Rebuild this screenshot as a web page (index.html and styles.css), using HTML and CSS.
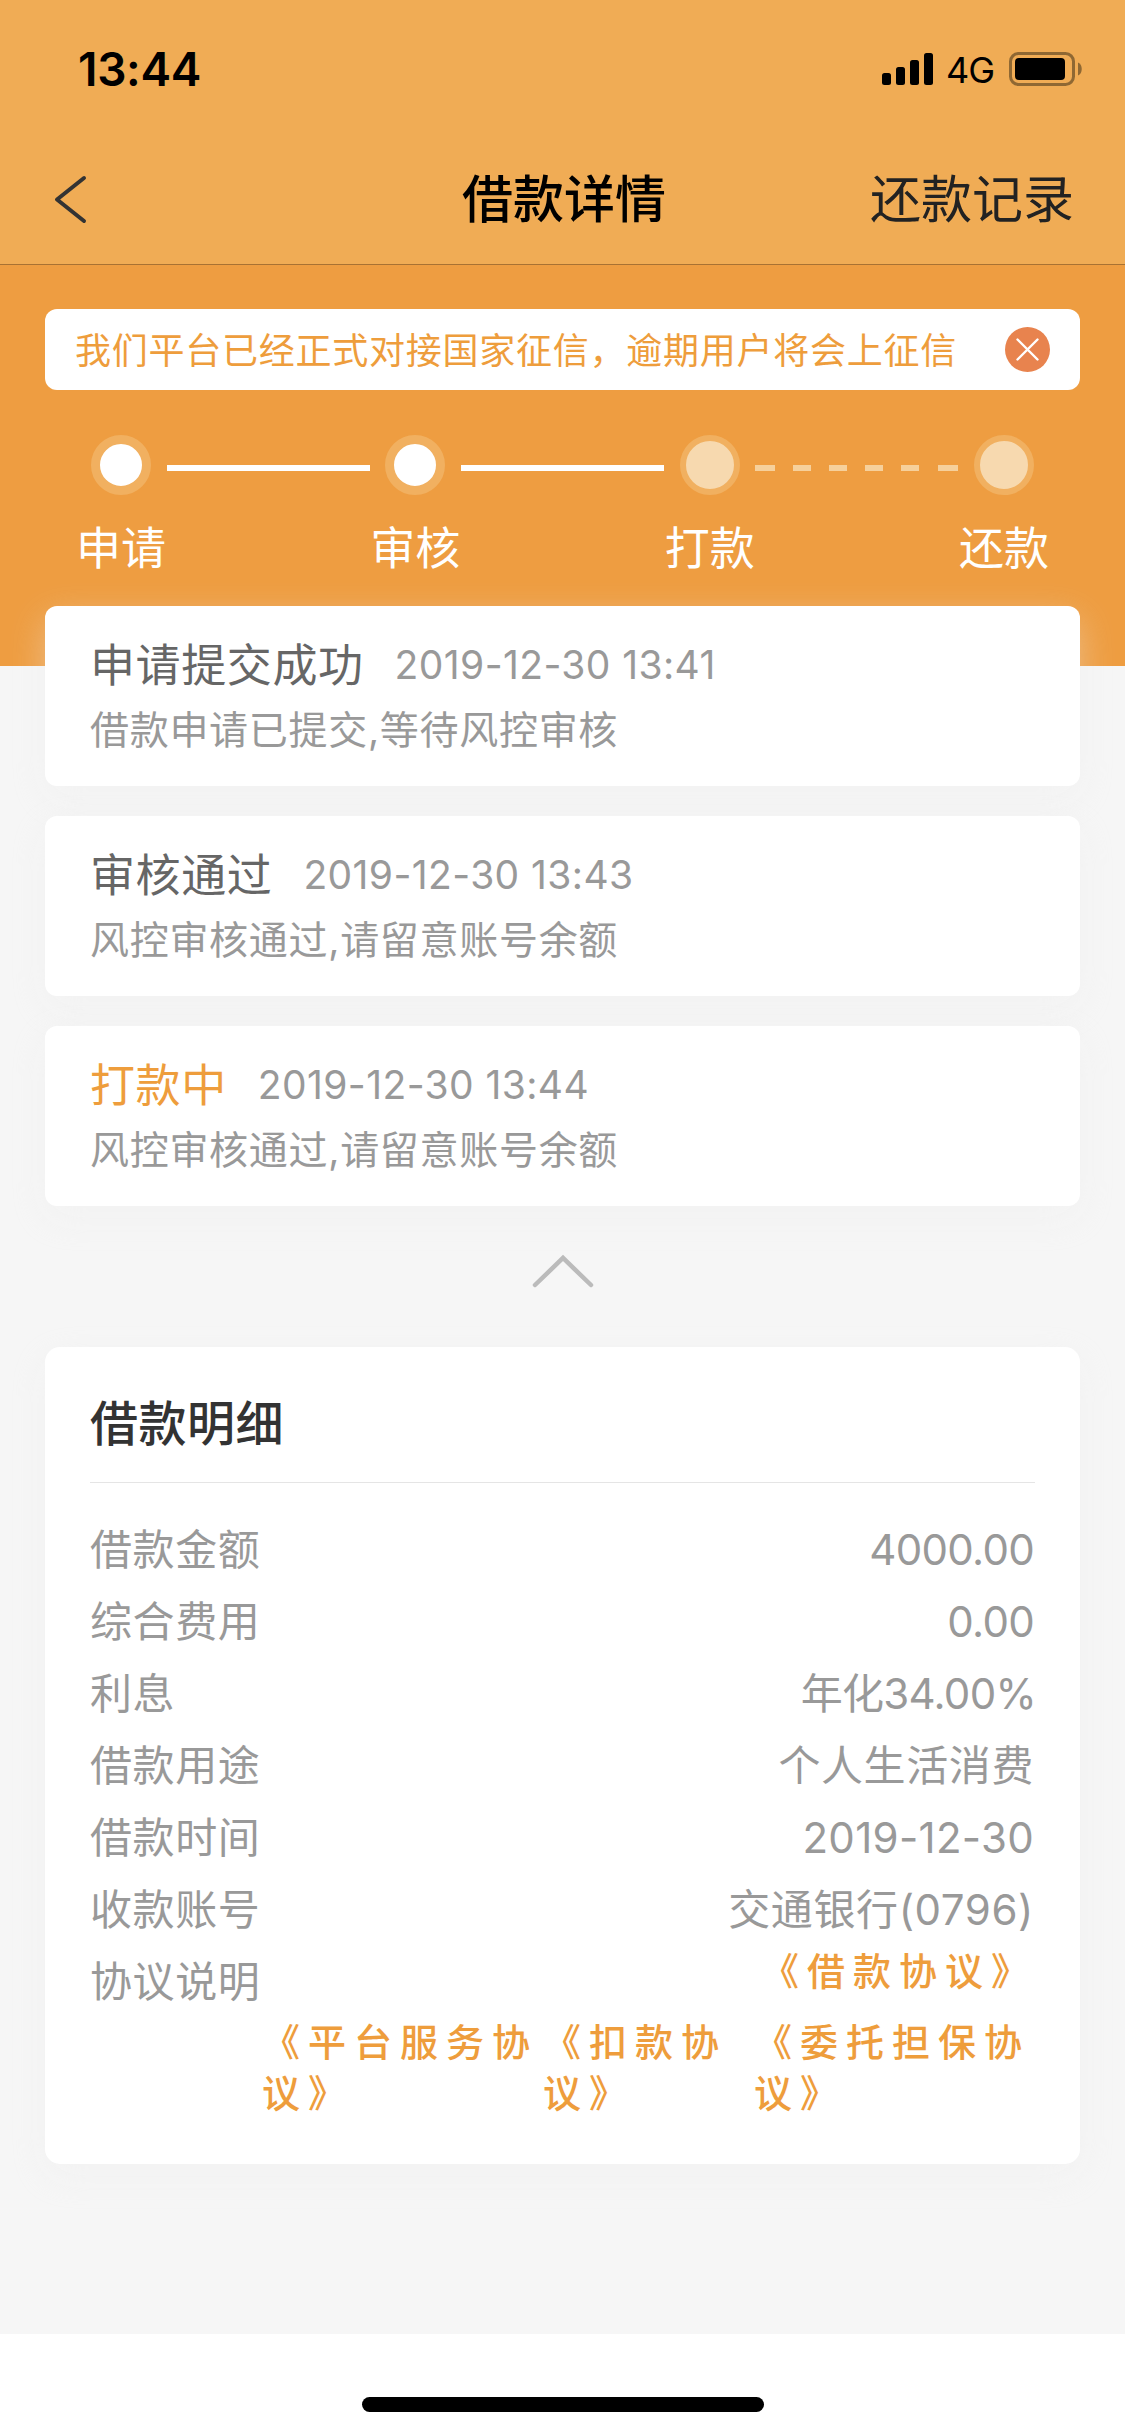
FILE: index.html
```html
<!DOCTYPE html>
<html lang="zh-CN">
<head>
    <meta charset="UTF-8">
    <meta name="viewport" content="width=device-width, initial-scale=1.0">
    <title>借款详情</title>
    <link rel="stylesheet" href="styles.css">
</head>
<body>

    <!-- Header -->
    <header class="header">
        <div class="status-bar">
            <span class="time">13:44</span>
            <div class="status-icons">
                <svg class="signal" width="51" height="32" viewBox="0 0 51 32">
                    <rect x="0" y="20" width="9" height="12" rx="2.5"/>
                    <rect x="14" y="14" width="9" height="18" rx="2.5"/>
                    <rect x="28" y="7" width="9" height="25" rx="2.5"/>
                    <rect x="42" y="0" width="9" height="32" rx="2.5"/>
                </svg>
                <span class="network">4G</span>
                <svg class="battery" width="73" height="34" viewBox="0 0 73 34">
                    <rect x="1.5" y="1.5" width="63" height="31" rx="8" fill="none" stroke="#8f6833" stroke-width="3"/>
                    <rect x="6" y="6" width="50" height="22" rx="4"/>
                    <path d="M69 10.500c5 2 5 11 0 13z" fill="#8f6833"/>
                </svg>
            </div>
        </div>
        <nav class="nav-bar">
            <svg class="back" width="33" height="49" viewBox="0 0 33 49">
                <path d="M30 3L3 24.500L30 46" fill="none" stroke="#333" stroke-width="4" stroke-linecap="round" stroke-linejoin="round"/>
            </svg>
            <h1 class="title">借款详情</h1>
            <a class="nav-link">还款记录</a>
        </nav>
    </header>

    <main class="content">
        <!-- Progress -->
        <section class="progress">
            <div class="notice">
                <p>我们平台已经正式对接国家征信，逾期用户将会上征信</p>
                <svg class="notice-close" width="45" height="45" viewBox="0 0 45 45">
                    <circle cx="22.500" cy="22.500" r="22.500" fill="#e8834e"/>
                    <path d="M12.500 12.500L32.500 32.500M32.500 12.500L12.500 32.500" stroke="#fff" stroke-width="2.400" stroke-linecap="round"/>
                </svg>
            </div>
            <div class="steps">
                <span class="dot done"></span>
                <span class="line"></span>
                <span class="dot done"></span>
                <span class="line"></span>
                <span class="dot"></span>
                <svg class="line-dashed" width="203" height="6" viewBox="0 0 203 6">
                    <path d="M0 3h20M38 3h18M74 3h18M110 3h18M146 3h18M183 3h20" stroke="#f6d09b" stroke-width="6"/>
                </svg>
                <span class="dot"></span>
            </div>
            <div class="step-labels">
                <span>申请</span>
                <span>审核</span>
                <span>打款</span>
                <span>还款</span>
            </div>
        </section>

        <!-- Records -->
        <section class="records">
            <div class="card record">
                <div class="record-head"><h2>申请提交成功</h2><time>2019-12-30 13:41</time></div>
                <p>借款申请已提交,等待风控审核</p>
            </div>
            <div class="card record">
                <div class="record-head"><h2>审核通过</h2><time>2019-12-30 13:43</time></div>
                <p>风控审核通过,请留意账号余额</p>
            </div>
            <div class="card record">
                <div class="record-head"><h2 class="active">打款中</h2><time>2019-12-30 13:44</time></div>
                <p>风控审核通过,请留意账号余额</p>
            </div>
        </section>

        <svg class="toggle" width="64" height="36" viewBox="0 0 64 36">
            <path d="M4 33L32 6L60 33" fill="none" stroke="#bbb" stroke-width="4.500" stroke-linecap="round"/>
        </svg>

        <!-- Details -->
        <section class="card details">
            <h2 class="details-title">借款明细</h2>
            <dl class="rows">
                <div class="row"><dt>借款金额</dt><dd class="amount">4000.00</dd></div>
                <div class="row"><dt>综合费用</dt><dd class="amount">0.00</dd></div>
                <div class="row"><dt>利息</dt><dd class="rate">年化34.00%</dd></div>
                <div class="row"><dt>借款用途</dt><dd>个人生活消费</dd></div>
                <div class="row"><dt>借款时间</dt><dd class="date">2019-12-30</dd></div>
                <div class="row"><dt>收款账号</dt><dd>交通银行(0796)</dd></div>
                <div class="row"><dt>协议说明</dt><dd class="agreement">《借款协议》</dd></div>
            </dl>
            <div class="agreements">
                <a class="agreement">《平台服务协议》</a>
                <a class="agreement">《扣款协议》</a>
                <a class="agreement">《委托担保协议》</a>
            </div>
        </section>
    </main>

    <footer class="home-area">
        <span class="home-bar"></span>
    </footer>

</body>
</html>
```
FILE: styles.css
```css
* {
    box-sizing: border-box;
    margin: 0;
    padding: 0;
}

body {
    width: 1125px;
    height: 2436px;
    overflow: hidden;
    background: #fff;
    font-family: Inter, "Noto Sans CJK SC", sans-serif;
    color: #999;
}

h1, h2 {
    font-weight: 400;
}

/* Header */
.header {
    height: 265px;
    background: #f0ac55;
    border-bottom: 1px solid #a87233;
}

.status-bar {
    height: 138px;
    padding: 0 43px 0 78px;
    display: flex;
    align-items: center;
    justify-content: space-between;
    color: #000;
}

.time {
    font-size: 46px;
    font-weight: 600;
    letter-spacing: -0.3px;
}

.status-icons {
    display: flex;
    align-items: center;
}

.network {
    width: 49px;
    margin: 0 14px 0 13px;
    font-size: 36px;
    line-height: 40px;
    padding-top: 2px;
    letter-spacing: -1px;
}

.nav-bar {
    height: 122px;
    padding: 0 51px 0 54px;
    display: grid;
    grid-template-columns: 1fr auto 1fr;
    align-items: center;
}

.title,
.nav-link {
    padding-bottom: 7px;
    font-size: 51px;
}

.title {
    font-weight: 500;
    color: #000;
}

.nav-link {
    justify-self: end;
    color: #222;
}

/* Progress */
.content {
    height: 2069px;
    background: #f6f6f6;
}

.progress {
    height: 401px;
    padding: 44px 45px 0;
    background: #ee9d41;
}

.notice {
    height: 81px;
    padding: 0 30px;
    display: flex;
    align-items: center;
    justify-content: space-between;
    background: #fff;
    border-radius: 12px;
    font-family: "Noto Sans CJK SC", sans-serif;
    font-size: 36px;
    letter-spacing: 0.75px;
    color: #ee9d3c;
}

.notice p {
    padding-bottom: 4px;
}

.steps {
    margin: 45px 46px 0;
    display: flex;
    align-items: center;
    justify-content: space-between;
}

.dot {
    width: 60px;
    height: 60px;
    border: 6px solid #f1b060;
    border-radius: 50%;
    background: #f7d9af;
}

.dot.done {
    border-width: 9px;
    background: #fff;
}

.line,
.line-dashed {
    width: 203px;
    height: 6px;
    margin-top: 6px;
}

.line {
    background: #fff;
}

.step-labels {
    margin: 21px 31px 0;
    display: flex;
    justify-content: space-between;
    font-size: 45px;
    line-height: 66px;
    color: #fff;
}

/* Cards */
.card {
    background: #fff;
    border-radius: 12px;
    box-shadow: 0 12px 36px rgba(238, 238, 238, 0.4);
}

.records {
    margin: -60px 45px 0;
    display: flex;
    flex-direction: column;
    gap: 30px;
}

.record {
    height: 180px;
    padding: 25px 45px;
}

.record-head {
    display: flex;
    align-items: center;
    height: 66px;
}

.record h2 {
    padding-bottom: 3px;
    font-size: 45px;
    letter-spacing: 0.6px;
    color: #666;
}

.record h2.active {
    color: #ee9d3c;
}

.record time {
    margin-left: 31px;
    font-size: 39px;
    letter-spacing: 0.4px;
}

.record p {
    font-size: 39px;
    line-height: 66px;
    letter-spacing: 0.7px;
}

.toggle {
    display: block;
    margin: 46px auto 59px;
}

/* Details */
.details {
    height: 817px;
    margin: 0 45px;
    padding: 0 45px;
    border-radius: 15px;
}

.details-title {
    height: 136px;
    padding-top: 17px;
    border-bottom: 1px solid #e5e5e5;
    font-size: 48px;
    font-weight: 500;
    line-height: 120px;
    letter-spacing: 0.5px;
    color: #333;
}

.rows {
    padding: 31px 1px 0 0;
}

.row {
    height: 72px;
    display: flex;
    justify-content: space-between;
    font-size: 42px;
    line-height: 72px;
    letter-spacing: 0.6px;
}

.amount {
    letter-spacing: -0.7px;
}

.rate {
    margin-right: -2px;
    letter-spacing: -0.7px;
}

.date {
    letter-spacing: 0.3px;
}

.agreement {
    font-size: 38px;
    font-weight: 500;
    line-height: 51px;
    letter-spacing: 8px;
    color: #ee9d3c;
}

.row .agreement {
    margin-right: -3px;
}

.agreements {
    margin-top: -1px;
    padding-left: 172px;
    display: grid;
    grid-template-columns: 281px 211px 282px;
}

/* Home indicator */
.home-area {
    height: 102px;
    padding-top: 63px;
    display: flex;
    justify-content: center;
}

.home-bar {
    width: 402px;
    height: 15px;
    border-radius: 8px;
    background: #000;
}
```
